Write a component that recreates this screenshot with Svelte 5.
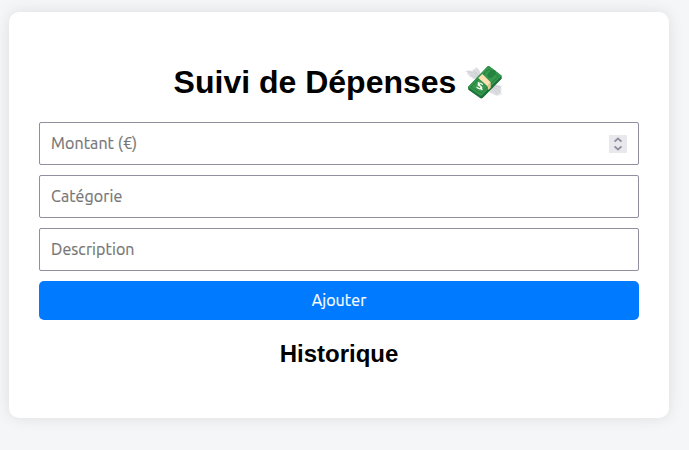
<script>
  let amount = $state('');
  let category = $state('');
  let description = $state('');
</script>

<main>
  <h1>
    <span>Suivi de Dépenses</span>
    <svg class="money" viewBox="33 24 114 114" aria-hidden="true">
      <path d="M79 65 79 53Q76 39 62 37L65 43Q58 42 54 44L58 49Q46 44 34 48L42 54 38 57 47 61 44 64 54 67 53 70 67 73Z" fill="#dcdde0" />
      <path d="m43 50 18 6 14 10M58 48l10 6 7 11M50 61l20 6" fill="none" stroke="#c3c5c9" stroke-width="2" />
      <path d="m108 87 12 1 24 5-5 6 5 3-5 4 5 4-5 2 5 7-9-2 2 6-8-4 1 5-12-7-9-3-7-11Z" fill="#dcdde0" />
      <path d="m112 92 14 2 14 3m-24-1 13 6 10 10m-25-13 9 8 9 10" fill="none" stroke="#c3c5c9" stroke-width="2" />
      <path d="M42 96 101 34Q104 32 108 35L143 62V71L86 129Q81 132 77 128L43 104Z" fill="#1b7139" />
      <path d="M42 96 101 34Q104 32 108 35L143 62 84 121Q81 124 77 121Z" fill="#35984d" />
      <path d="m51 96 53-54 29 22-52 50Z" fill="none" stroke="#23823f" stroke-width="3" />
      <ellipse cx="113" cy="57" rx="15" ry="9" transform="rotate(-43 113 57)" fill="#238440" />
      <path d="m73 69 12-12 25 25-9 12Z" fill="#ffe0b2" />
      <path d="m101 94 9-12v16l-7 7Z" fill="#f0c994" />
      <path d="M85 88q-8-7-12-1c-4 7 13 6 10 12-4 5-11 1-14-2m4-14 11 21" fill="none" stroke="#f5f8ec" stroke-width="4" stroke-linecap="round" />
    </svg>
  </h1>

  <form onsubmit={(event) => event.preventDefault()}>
    <div class="amount">
      <input bind:value={amount} inputmode="decimal" placeholder="Montant (€)" />
      <span class="stepper">
        <svg viewBox="0 0 18 18" aria-hidden="true">
          <path d="m5.5 6.7 3.5-3.2 3.5 3.2M5.5 11.3l3.5 3.2 3.5-3.2" />
        </svg>
      </span>
    </div>
    <input bind:value={category} placeholder="Catégorie" />
    <input bind:value={description} placeholder="Description" />
    <button>Ajouter</button>
  </form>

  <h2>Historique</h2>
</main>

<style>
  :global(html) {
    background: #f4f6f8;
  }
  :global(body) {
    font-family: "Liberation Sans", Arial, sans-serif;
  }
  :global(#app) {
    box-sizing: border-box;
    height: 450px;
    padding: 12px 0 0 9px;
  }
  main {
    box-sizing: border-box;
    width: 660px;
    height: 406px;
    padding: 51px 30px 30px;
    background: #fff;
    border-radius: 10px;
    box-shadow: 0 0 15px rgba(0, 0, 0, 0.1);
    color: #000;
  }
  h1 {
    display: flex;
    justify-content: center;
    gap: 9px;
    width: 599px;
    margin: 0 0 21px;
    font-size: 32px;
    line-height: 38px;
  }
  .money {
    width: 38px;
    height: 38px;
  }
  form {
    display: flex;
    flex-direction: column;
    gap: 10px;
  }
  .amount {
    position: relative;
    display: flex;
  }
  input {
    box-sizing: border-box;
    width: 100%;
    height: 43px;
    padding: 9px 11px 11px;
    border: 1px solid #8f8f9d;
    border-radius: 2px;
    outline: none;
    background: #fff;
    font: 16px Ubuntu, "Noto Sans", sans-serif;
    letter-spacing: 0.1px;
  }
  input::placeholder {
    color: #757575;
    opacity: 1;
    -webkit-text-stroke: 0.2px #757575;
  }
  .stepper {
    position: absolute;
    top: 13px;
    right: 12px;
    width: 18px;
    height: 18px;
    background: #e9e9ed;
  }
  .stepper svg {
    display: block;
    fill: none;
    stroke: #8f8f9d;
    stroke-width: 1.8;
  }
  button {
    height: 39px;
    padding: 0 0 2px;
    border: 0;
    border-radius: 5px;
    background: #007bff;
    color: #fff;
    font: 16px Ubuntu, "Noto Sans", sans-serif;
    letter-spacing: 0.1px;
    -webkit-text-stroke: 0.2px #fff;
  }
  h2 {
    margin: 20px 0 0;
    font-size: 24px;
    line-height: 28px;
    text-align: center;
  }
</style>
